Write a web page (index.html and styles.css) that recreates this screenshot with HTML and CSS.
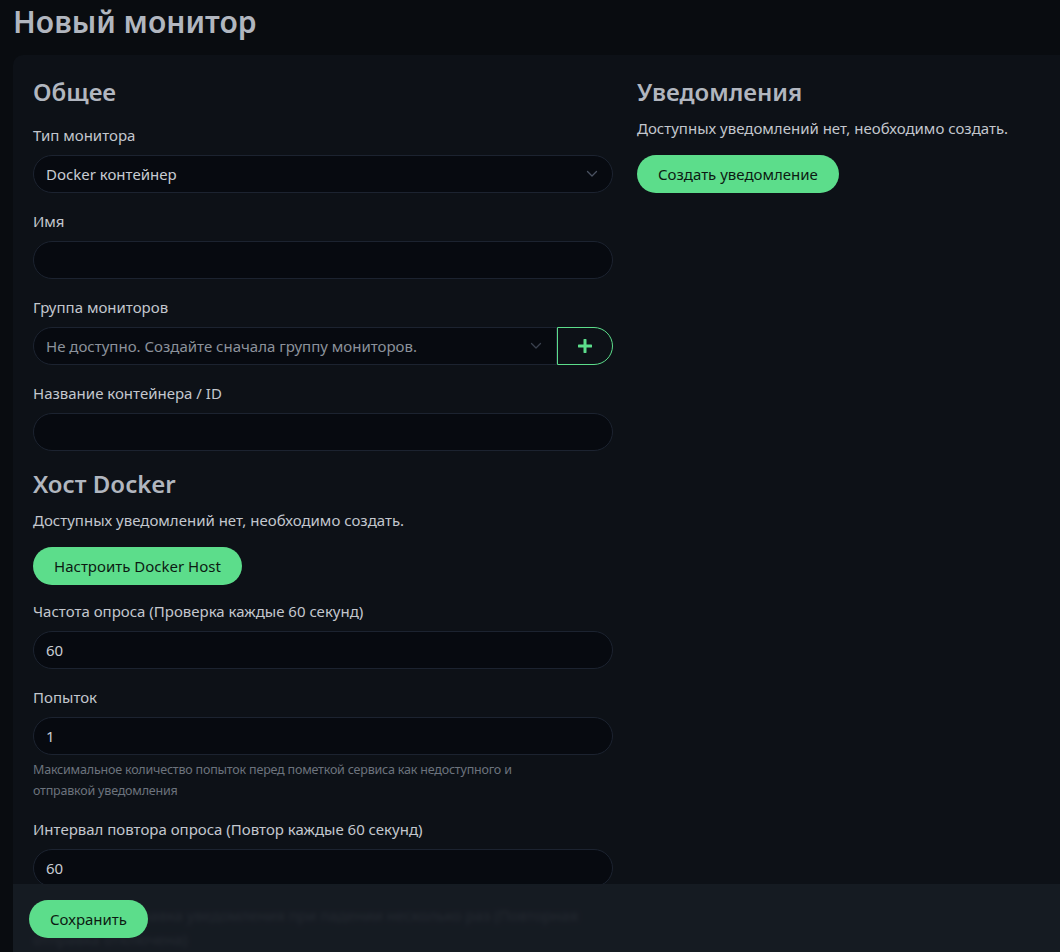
FILE: index.html
```html
<!DOCTYPE html>
<html lang="ru">
<head>
<meta charset="utf-8">
<title>Новый монитор</title>
<link rel="stylesheet" href="styles.css">
</head>
<body>
<div class="page">
  <h1 class="title">Новый монитор</h1>
  <div class="card">
    <div class="cols">
      <div class="col">
        <h2 class="sec">Общее</h2>
        <div class="field">
          <div class="label">Тип монитора</div>
          <div class="control select">
            <span class="val">Docker контейнер</span>
            <svg class="chev" width="12" height="8" viewBox="0 0 12 8"><path d="M1.5 1.5 6 6l4.5-4.5" fill="none" stroke="#4a5261" stroke-width="1.3" stroke-linecap="round" stroke-linejoin="round"/></svg>
          </div>
        </div>
        <div class="field">
          <div class="label">Имя</div>
          <div class="control"></div>
        </div>
        <div class="field">
          <div class="label">Группа мониторов</div>
          <div class="group">
            <div class="control select grouped">
              <span class="val muted">Не доступно. Создайте сначала группу мониторов.</span>
              <svg class="chev" width="12" height="8" viewBox="0 0 12 8"><path d="M1.5 1.5 6 6l4.5-4.5" fill="none" stroke="#3a414e" stroke-width="1.3" stroke-linecap="round" stroke-linejoin="round"/></svg>
            </div>
            <div class="plus-btn">
              <svg width="14" height="14" viewBox="0 0 14 14"><path d="M7 1v12M1 7h12" stroke="#5cdd8b" stroke-width="3" stroke-linecap="round"/></svg>
            </div>
          </div>
        </div>
        <div class="field">
          <div class="label">Название контейнера / ID</div>
          <div class="control"></div>
        </div>
        <h2 class="sec">Хост Docker</h2>
        <p class="txt">Доступных уведомлений нет, необходимо создать.</p>
        <div class="btn">Настроить Docker Host</div>
        <div class="field">
          <div class="label">Частота опроса (Проверка каждые 60 секунд)</div>
          <div class="control"><span class="val">60</span></div>
        </div>
        <div class="field">
          <div class="label">Попыток</div>
          <div class="control"><span class="val">1</span></div>
          <div class="help">Максимальное количество попыток перед пометкой сервиса как недоступного и отправкой уведомления</div>
        </div>
        <div class="field">
          <div class="label">Интервал повтора опроса (Повтор каждые 60 секунд)</div>
          <div class="control"><span class="val">60</span></div>
        </div>
        <div class="field">
          <div class="label">Повторная отправка уведомления при падении несколько раз (Повторная отправка отключена)</div>
          <div class="control"><span class="val">0</span></div>
        </div>
      </div>
      <div class="col">
        <h2 class="sec">Уведомления</h2>
        <p class="txt">Доступных уведомлений нет, необходимо создать.</p>
        <div class="btn">Создать уведомление</div>
      </div>
    </div>
  </div>
  <div class="bottom-bar">
    <div class="btn">Сохранить</div>
  </div>
</div>
</body>
</html>
```

FILE: styles.css
```css
* { box-sizing: border-box; }
html, body {
  margin: 0;
  padding: 0;
  background: #090c10;
  overflow: hidden;
  height: 100%;
}
body {
  font-family: "Noto Sans", "Open Sans", sans-serif;
  font-size: 15px;
  color: #c3c7ce;
}
.page {
  padding: 3px 0 0 13px;
}
.title {
  margin: 0;
  font-size: 30px;
  line-height: 38px;
  font-weight: 600;
  color: #b1b6bf;
}
.card {
  margin-top: 14px;
  width: 1237px;
  background: #0d1117;
  border-radius: 10px;
  padding: 20px 20px 120px;
}
.cols {
  display: grid;
  grid-template-columns: 580px 580px;
  column-gap: 24px;
}
.sec {
  margin: 16px 0 8px;
  font-size: 24px;
  line-height: 34px;
  font-weight: 600;
  color: #b1b6bf;
}
.col > .sec:first-child { margin-top: 0; }
.field {
  margin: 14px 0 16px;
}
.label {
  line-height: 24px;
  margin-bottom: 8px;
  color: #c3c7ce;
}
.control {
  height: 38px;
  border: 1px solid #1c2330;
  background: #070a10;
  border-radius: 19px;
  padding: 0 12px;
  display: flex;
  align-items: center;
  color: #c8ccd3;
}
.select { justify-content: space-between; }
.val.muted { color: #8c929b; }
.chev { margin-right: 2px; flex: none; }
.group {
  display: flex;
}
.group .grouped {
  flex: 1;
  border-radius: 19px 0 0 19px;
}
.plus-btn {
  width: 56px;
  height: 38px;
  border: 1px solid #5cdd8b;
  border-radius: 0 19px 19px 0;
  display: flex;
  align-items: center;
  justify-content: center;
  flex: none;
}
.txt {
  margin: 0 0 16px;
  line-height: 22px;
  color: #c3c7ce;
}
.btn {
  display: inline-flex;
  align-items: center;
  height: 38px;
  padding: 0 21px;
  border-radius: 19px;
  background: #5cdd8b;
  color: #0c1a12;
}
.help {
  margin-top: 4px;
  max-width: 500px;
  font-size: 12.5px;
  line-height: 21px;
  color: #6c737d;
  letter-spacing: -0.2px;
}
.bottom-bar {
  position: fixed;
  left: 13px;
  right: 0;
  bottom: 0;
  height: 68px;
  padding: 16px;
  background: rgba(23, 28, 35, 0.93);
  backdrop-filter: blur(2px);
}
```
